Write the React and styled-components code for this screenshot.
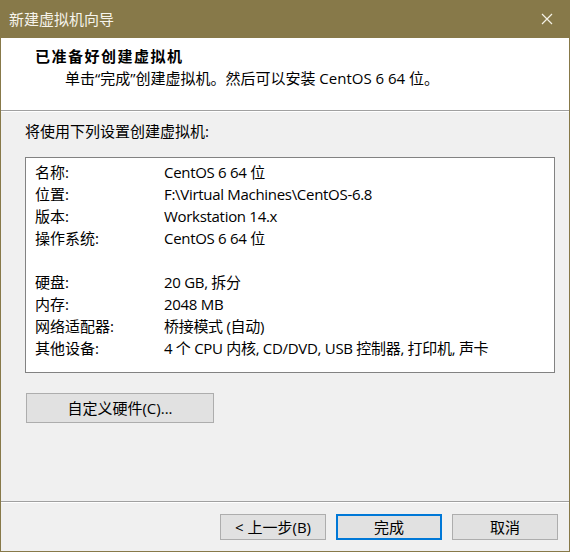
import React from 'react';
import styled, { createGlobalStyle } from 'styled-components';

const summary = [
  { label: '名称:', value: 'CentOS 6 64 位' },
  { label: '位置:', value: 'F:\\Virtual Machines\\CentOS-6.8' },
  { label: '版本:', value: 'Workstation 14.x' },
  { label: '操作系统:', value: 'CentOS 6 64 位' },
  { gap: true },
  { label: '硬盘:', value: '20 GB, 拆分' },
  { label: '内存:', value: '2048 MB' },
  { label: '网络适配器:', value: '桥接模式 (自动)' },
  { label: '其他设备:', value: '4 个 CPU 内核, CD/DVD, USB 控制器, 打印机, 声卡' },
];

const GlobalStyle = createGlobalStyle`
  html, body {
    margin: 0;
    padding: 0;
    background: #f0f0f0;
  }
  body {
    font-family: "Open Sans", "Noto Sans CJK SC", sans-serif;
    font-size: 15px;
    color: #000;
  }
`;

const App = () => (
  <>
    <GlobalStyle />
    <Window>
      <TitleBar>
        <TitleText>新建虚拟机向导</TitleText>
        <CloseButton>
          <svg width="12" height="12" viewBox="0 0 12 12">
            <path d="M1 1 L11 11 M11 1 L1 11" stroke="#f4f1e6" strokeWidth="1.2" fill="none" />
          </svg>
        </CloseButton>
      </TitleBar>

      <Header>
        <HeaderTitle>已准备好创建虚拟机</HeaderTitle>
        <HeaderSub>单击“完成”创建虚拟机。然后可以安装 CentOS 6 64 位。</HeaderSub>
      </Header>
      <Etched />

      <Body>
        <Intro>将使用下列设置创建虚拟机:</Intro>
        <ListBox>
          {summary.map((row, i) =>
            row.gap ? (
              <Spacer key={i} />
            ) : (
              <Row key={i}>
                <span>{row.label}</span>
                <Value>{row.value}</Value>
              </Row>
            )
          )}
        </ListBox>
        <Button $wide>自定义硬件(C)...</Button>
      </Body>

      <Etched />
      <Footer>
        <Button>&lt; 上一步(B)</Button>
        <Button $primary>完成</Button>
        <Button>取消</Button>
      </Footer>
    </Window>
  </>
);

const Window = styled.div`
  width: 570px;
  height: 552px;
  box-sizing: border-box;
  display: flex;
  flex-direction: column;
  background: #f0f0f0;
  border: 1px solid #877949;
  border-top: none;
`;

const TitleBar = styled.div`
  height: 38px;
  flex-shrink: 0;
  display: flex;
  align-items: center;
  justify-content: space-between;
  background: #877949;
  padding-left: 9px;
  margin: 0 -1px;
`;

const TitleText = styled.div`
  color: #f6f4ec;
  font-family: "Noto Sans CJK SC", sans-serif;
  font-size: 15px;
  line-height: 20px;
`;

const CloseButton = styled.div`
  width: 46px;
  height: 38px;
  display: flex;
  align-items: center;
  justify-content: center;
`;

const Header = styled.div`
  height: 72px;
  background: #fff;
  padding: 8px 0 0 34px;
  box-sizing: border-box;
`;

const HeaderTitle = styled.div`
  font-family: "Noto Sans CJK SC", sans-serif;
  font-weight: 700;
  font-size: 15px;
  line-height: 20px;
  letter-spacing: 1.5px;
`;

const HeaderSub = styled.div`
  padding-left: 30px;
  margin-top: 2px;
  line-height: 20px;
`;

const Etched = styled.div`
  height: 1px;
  background: #a0a0a0;
  border-bottom: 1px solid #fff;
  flex-shrink: 0;
`;

const Body = styled.div`
  flex: 1;
  padding: 9px 14px 0 24px;
`;

const Intro = styled.div`
  line-height: 20px;
`;

const ListBox = styled.div`
  margin-top: 16px;
  height: 216px;
  box-sizing: border-box;
  border: 1px solid #828282;
  background: #fff;
  padding: 3px 0 0 9px;
`;

const Row = styled.div`
  display: grid;
  grid-template-columns: 129px 1fr;
  height: 22px;
  line-height: 22px;
  white-space: nowrap;
`;

const Value = styled.span`
  letter-spacing: -0.3px;
`;

const Spacer = styled.div`
  height: 22px;
`;

const Footer = styled.div`
  height: 48px;
  display: flex;
  justify-content: flex-end;
  gap: 10px;
  padding: 11px 11px 0 0;
  box-sizing: border-box;
`;

const Button = styled.div`
  box-sizing: border-box;
  width: ${(p) => (p.$wide ? '188px' : '106px')};
  height: ${(p) => (p.$wide ? '30px' : '26px')};
  margin: ${(p) => (p.$wide ? '20px 0 0 1px' : '0')};
  display: flex;
  align-items: center;
  justify-content: center;
  background: #e1e1e1;
  border: ${(p) => (p.$primary ? '2px solid #0078d7' : '1px solid #adadad')};
  line-height: 20px;
`;

export default App;
